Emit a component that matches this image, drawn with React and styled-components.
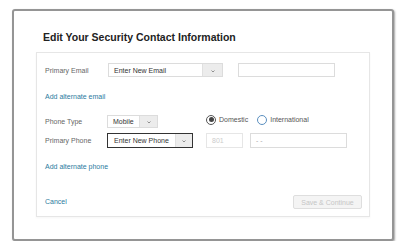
import React from "react";
import styled, { createGlobalStyle } from "styled-components";

const Global = createGlobalStyle`
  html, body { margin: 0; padding: 0; background: #fff; }
  body { font-family: "Liberation Sans", Arial, sans-serif; }
  * { box-sizing: border-box; }
`;

const Page = styled.div`
  padding: 9px 0 0 12px;
`;

const Modal = styled.div`
  width: 382px;
  border: 2px solid #959595;
  border-radius: 3px;
  box-shadow: 1px 1px 2px rgba(0, 0, 0, 0.35);
  background: #fff;
  padding: 20px 22px 22px 22px;
`;

const Title = styled.h2`
  margin: 0 0 9px 7px;
  font-size: 10.5px;
  line-height: 12px;
  font-weight: bold;
  color: #222;
`;

const Panel = styled.div`
  border: 1px solid #e6e6e6;
  box-shadow: 0 1px 2px rgba(0, 0, 0, 0.04);
  padding: 10px 7px 7px 8px;
  display: flex;
  flex-direction: column;
`;

const Row = styled.div`
  display: flex;
  align-items: center;
  gap: ${(p) => p.gap || 0}px;
`;

const Label = styled.div`
  width: ${(p) => p.w || 63}px;
  flex: none;
  font-size: 7px;
  color: #666;
`;

const Select = styled.div`
  width: ${(p) => p.w}px;
  height: ${(p) => p.h}px;
  display: flex;
  border: 1px solid ${(p) => (p.focused ? "#333" : "#dcdcdc")};
  background: #fff;
  flex: none;
`;

const SelectText = styled.div`
  flex: 1;
  font-size: 7px;
  color: #333;
  padding-left: ${(p) => p.pl || 5}px;
  display: flex;
  align-items: center;
`;

const SelectArrow = styled.div`
  width: ${(p) => p.w}px;
  background: #ececec;
  border-left: 1px solid #e0e0e0;
  display: flex;
  align-items: center;
  justify-content: center;
  padding-top: 2px;
`;

const Chevron = () => (
  <svg width="4" height="3" viewBox="0 0 4 3">
    <path d="M0.5 0.5 L2 2 L3.5 0.5" stroke="#777" strokeWidth="0.8" fill="none" />
  </svg>
);

const Input = styled.div`
  width: ${(p) => p.w}px;
  height: ${(p) => p.h || 14}px;
  border: 1px solid ${(p) => p.bc || "#dcdcdc"};
  font-size: 7px;
  color: ${(p) => p.color || "#bbb"};
  padding-left: 5px;
  display: flex;
  align-items: center;
  flex: none;
`;

const Link = styled.div`
  font-size: 7px;
  line-height: 10px;
  color: #2c7ba0;
  margin-top: ${(p) => p.mt}px;
`;

const PhoneGrid = styled.div`
  display: grid;
  grid-template-columns: 62px 99px auto;
  row-gap: 5px;
  align-items: center;
  margin-top: 13px;
`;

const RadioGroup = styled.div`
  display: flex;
  align-items: center;
  margin-top: -4px;
`;

const RadioOption = styled.div`
  display: flex;
  align-items: center;
  gap: 3px;
  font-size: 7px;
  color: #555;
  margin-right: 9px;
`;

const RadioCircle = styled.span`
  width: 10px;
  height: 10px;
  border-radius: 50%;
  border: 1px solid ${(p) => (p.checked ? "#555" : "#5a8fbf")};
  display: flex;
  align-items: center;
  justify-content: center;
  &::after {
    content: "";
    width: 5px;
    height: 5px;
    border-radius: 50%;
    background: ${(p) => (p.checked ? "#444" : "transparent")};
  }
`;

const Footer = styled.div`
  display: flex;
  align-items: center;
  justify-content: space-between;
  margin-top: 23px;
`;

const Button = styled.div`
  width: 69px;
  height: 14px;
  border: 1px solid #dedede;
  border-radius: 2px;
  background: #f4f4f4;
  color: #c6c6c6;
  font-size: 7px;
  display: flex;
  align-items: center;
  justify-content: center;
`;

export default function App() {
  return (
    <Page>
      <Global />
      <Modal>
        <Title>Edit Your Security Contact Information</Title>
        <Panel>
          <Row gap={15}>
            <Row>
              <Label>Primary Email</Label>
              <Select w={115} h={14}>
                <SelectText>Enter New Email</SelectText>
                <SelectArrow w={20}>
                  <Chevron />
                </SelectArrow>
              </Select>
            </Row>
            <Input w={97} />
          </Row>
          <Link mt={15}>Add alternate email</Link>
          <PhoneGrid>
            <Label w={62}>Phone Type</Label>
            <Select w={51} h={13}>
              <SelectText>Mobile</SelectText>
              <SelectArrow w={18}>
                <Chevron />
              </SelectArrow>
            </Select>
            <RadioGroup>
              <RadioOption>
                <RadioCircle checked />
                Domestic
              </RadioOption>
              <RadioOption>
                <RadioCircle />
                International
              </RadioOption>
            </RadioGroup>
            <Label w={62}>Primary Phone</Label>
            <Select w={86} h={15} focused>
              <SelectText pl={6}>Enter New Phone</SelectText>
              <SelectArrow w={17}>
                <Chevron />
              </SelectArrow>
            </Select>
            <Row gap={7}>
              <Input w={37} h={15} bc="#e6e6e6" color="#ccc">801</Input>
              <Input w={97} h={15} bc="#dcdcdc" color="#aaa">- -</Input>
            </Row>
          </PhoneGrid>
          <Link mt={14}>Add alternate phone</Link>
          <Footer>
            <Link mt={0}>Cancel</Link>
            <Button>Save &amp; Continue</Button>
          </Footer>
        </Panel>
      </Modal>
    </Page>
  );
}
